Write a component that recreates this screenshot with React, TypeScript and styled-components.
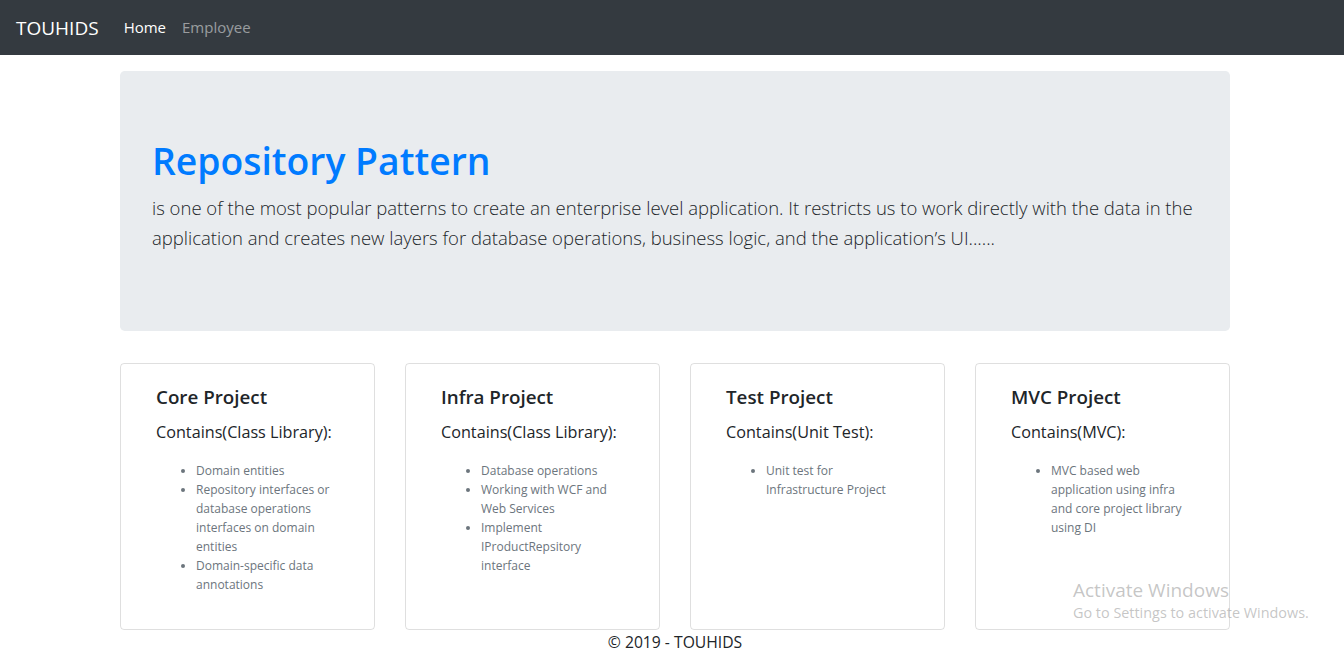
import React from "react";
import styled, { createGlobalStyle } from "styled-components";

const Global = createGlobalStyle`
  * { box-sizing: border-box; }
  body {
    margin: 0;
    font-family: "Open Sans", "Noto Sans", Arial, sans-serif;
    color: #212529;
    background: #fff;
    font-size: 16px;
    line-height: 1.5;
  }
`;

const Page = styled.div`
  position: relative;
  min-height: 654px;
  overflow: hidden;
`;

const Navbar = styled.nav`
  height: 55px;
  background: #343a40;
  display: flex;
  align-items: center;
  padding: 0 16px;
`;

const Brand = styled.a`
  color: #fff;
  font-size: 19px;
  line-height: 30px;
  margin-right: 17px;
  text-decoration: none;
`;

const NavLink = styled.a<{ $active?: boolean }>`
  color: ${(p) => (p.$active ? "#fff" : "rgba(255,255,255,.5)")};
  padding: 8px;
  font-size: 15px;
  text-decoration: none;
`;

const Container = styled.main`
  width: 1110px;
  margin-left: calc(50% - 552px);
  padding-top: 16px;
`;

const Jumbotron = styled.section`
  background: #e9ecef;
  border-radius: 4.8px;
  padding: 64px 32px;
  margin-bottom: 32px;
`;

const Title = styled.h1`
  margin: 0 0 8px;
  padding-top: 2px;
  font-size: 37.3px;
  line-height: 48px;
  font-weight: 600;
  color: #007bff;
`;

const Lead = styled.p`
  margin: 0 0 14px;
  font-size: 18.5px;
  line-height: 30px;
  font-weight: 300;
  color: #212529;
`;

const Grid = styled.div`
  display: grid;
  grid-template-columns: repeat(4, 255px);
  column-gap: 30px;
`;

const Card = styled.div`
  border: 1px solid rgba(0, 0, 0, 0.125);
  border-radius: 4px;
  height: 267px;
  padding: 21px 35px;
`;

const CardTitle = styled.h5`
  margin: 0 0 11px;
  font-size: 18.8px;
  line-height: 24px;
  font-weight: 600;
`;

const CardText = styled.p`
  margin: 0 0 16px;
  font-size: 16.2px;
  line-height: 24px;
`;

const List = styled.ul`
  margin: 0;
  padding-left: 40px;
  font-size: 12px;
  line-height: 19px;
  color: #6c757d;
  padding-top: 1px;
`;

const Footer = styled.footer`
  text-align: center;
  font-size: 15.7px;
  line-height: 24px;
`;

const Watermark = styled.div`
  position: absolute;
  left: 1073px;
  top: 577px;
  color: rgba(160, 160, 160, 0.6);
  font-family: "Open Sans", sans-serif;
  pointer-events: none;
`;

const WmTitle = styled.div`
  font-size: 19px;
  line-height: 26px;
`;

const WmSub = styled.div`
  font-size: 14.4px;
  line-height: 20px;
`;

const cards = [
  {
    title: "Core Project",
    text: "Contains(Class Library):",
    items: [
      "Domain entities",
      "Repository interfaces or database operations interfaces on domain entities",
      "Domain-specific data annotations",
    ],
  },
  {
    title: "Infra Project",
    text: "Contains(Class Library):",
    items: [
      "Database operations",
      "Working with WCF and Web Services",
      "Implement IProductRepsitory interface",
    ],
  },
  {
    title: "Test Project",
    text: "Contains(Unit Test):",
    items: ["Unit test for Infrastructure Project"],
  },
  {
    title: "MVC Project",
    text: "Contains(MVC):",
    items: ["MVC based web application using infra and core project library using DI"],
  },
];

export default function App() {
  return (
    <Page>
      <Global />
      <Navbar>
        <Brand>TOUHIDS</Brand>
        <NavLink $active>Home</NavLink>
        <NavLink>Employee</NavLink>
      </Navbar>
      <Container>
        <Jumbotron>
          <Title>Repository Pattern</Title>
          <Lead>
            is one of the most popular patterns to create an enterprise level application. It restricts us to work
            directly with the data in the application and creates new layers for database operations, business logic,
            and the application’s UI......
          </Lead>
        </Jumbotron>
        <Grid>
          {cards.map((c) => (
            <Card key={c.title}>
              <CardTitle>{c.title}</CardTitle>
              <CardText>{c.text}</CardText>
              <List>
                {c.items.map((i) => (
                  <li key={i}>{i}</li>
                ))}
              </List>
            </Card>
          ))}
        </Grid>
        <Footer>© 2019 - TOUHIDS</Footer>
      </Container>
      <Watermark>
        <WmTitle>Activate Windows</WmTitle>
        <WmSub>Go to Settings to activate Windows.</WmSub>
      </Watermark>
    </Page>
  );
}
